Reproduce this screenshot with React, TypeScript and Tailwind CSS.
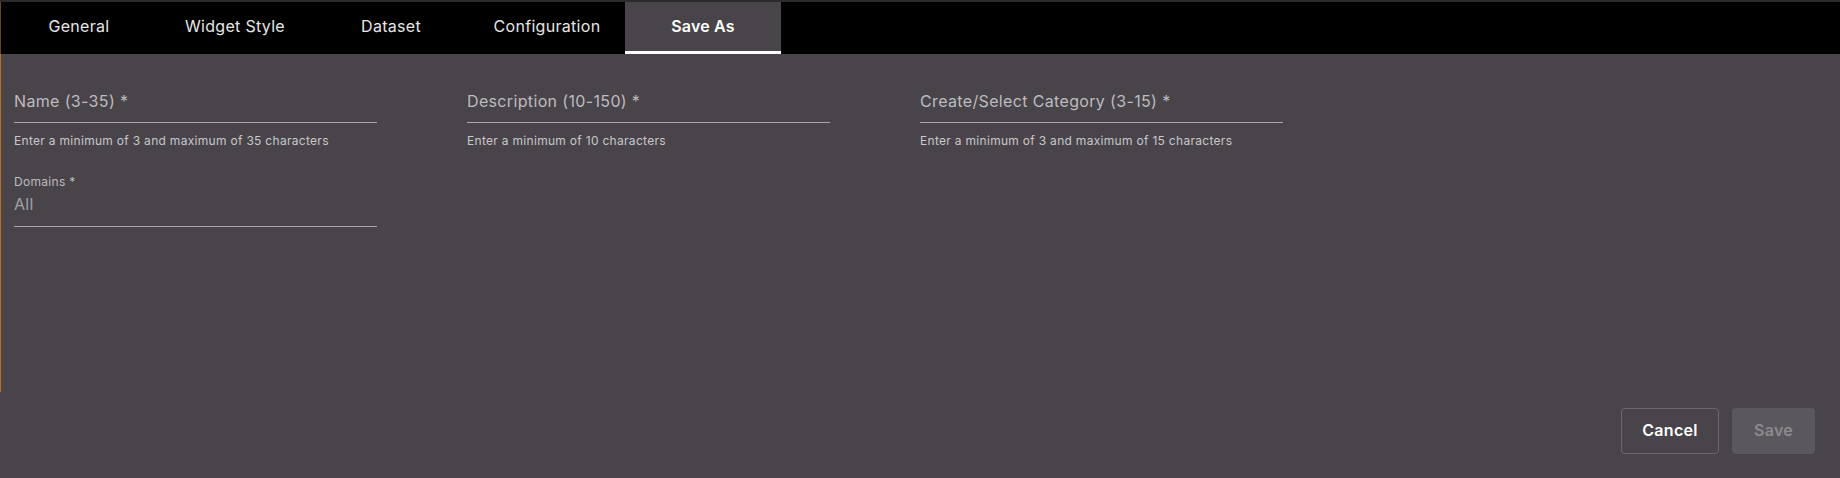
import React from 'react';

const tabs = ['General', 'Widget Style', 'Dataset', 'Configuration', 'Save As'];

interface FieldProps {
  label: string;
  hint: string;
}

const TextField: React.FC<FieldProps> = ({ label, hint }) => (
  <div className="w-[363px]">
    <div className="pb-[9px] border-b border-[#a9a7ab]">
      <span className="block text-[16px] leading-6 tracking-[0.35px] text-[#bdbbbf]">{label}</span>
    </div>
    <p className="mt-[9px] text-[12px] leading-[18px] tracking-[0.3px] text-[#c9c7cb]">{hint}</p>
  </div>
);

export default function App() {
  const active = 'Save As';

  return (
    <div className="relative flex h-[478px] w-full flex-col bg-[#48444a] font-['Inter',sans-serif]">
      {/* thin accent line on the left edge */}
      <div className="absolute left-0 top-[2px] h-[390px] w-px bg-[linear-gradient(to_bottom,#6b4220_0,#6b4220_52px,#b86f1f_52px,#b86f1f_100%)]" />

      <div className="flex h-[54px] border-t-2 border-[#2b2b2b] bg-black pl-px">
        {tabs.map((tab) => (
          <div
            key={tab}
            className={
              tab === active
                ? 'flex w-[156px] items-center justify-center border-b-[3px] border-white bg-[#48444a] pb-[2px] text-[16px] font-semibold tracking-[0.2px] text-white'
                : 'flex w-[156px] items-center justify-center border-b-[3px] border-transparent pb-px text-[16px] tracking-[0.3px] text-[#e6e6e6]'
            }
          >
            {tab}
          </div>
        ))}
      </div>

      <div className="flex gap-[90px] px-[14px] pt-[35px]">
        <div>
          <TextField label="Name (3-35) *" hint="Enter a minimum of 3 and maximum of 35 characters" />
          <div className="mt-[23px] w-[363px]">
            <span className="block text-[12px] leading-[18px] tracking-[0.3px] text-[#bdbbbf]">Domains *</span>
            <div className="mt-px pb-[10px] border-b border-[#a9a7ab]">
              <span className="block text-[16px] leading-6 tracking-[0.3px] text-[#a3a1a5]">All</span>
            </div>
          </div>
        </div>
        <TextField label="Description (10-150) *" hint="Enter a minimum of 10 characters" />
        <TextField label="Create/Select Category (3-15) *" hint="Enter a minimum of 3 and maximum of 15 characters" />
      </div>

      <div className="mt-auto flex justify-end gap-[13px] pb-[24px] pr-[25px]">
        <button className="h-[46px] w-[98px] rounded border border-[#6b676d] pb-[3px] text-[16px] font-semibold tracking-[0.3px] text-white">
          Cancel
        </button>
        <button className="h-[46px] w-[83px] rounded bg-[#5b585d] pb-[3px] text-[16px] font-semibold tracking-[0.3px] text-[#8c8a8e]">
          Save
        </button>
      </div>
    </div>
  );
}
